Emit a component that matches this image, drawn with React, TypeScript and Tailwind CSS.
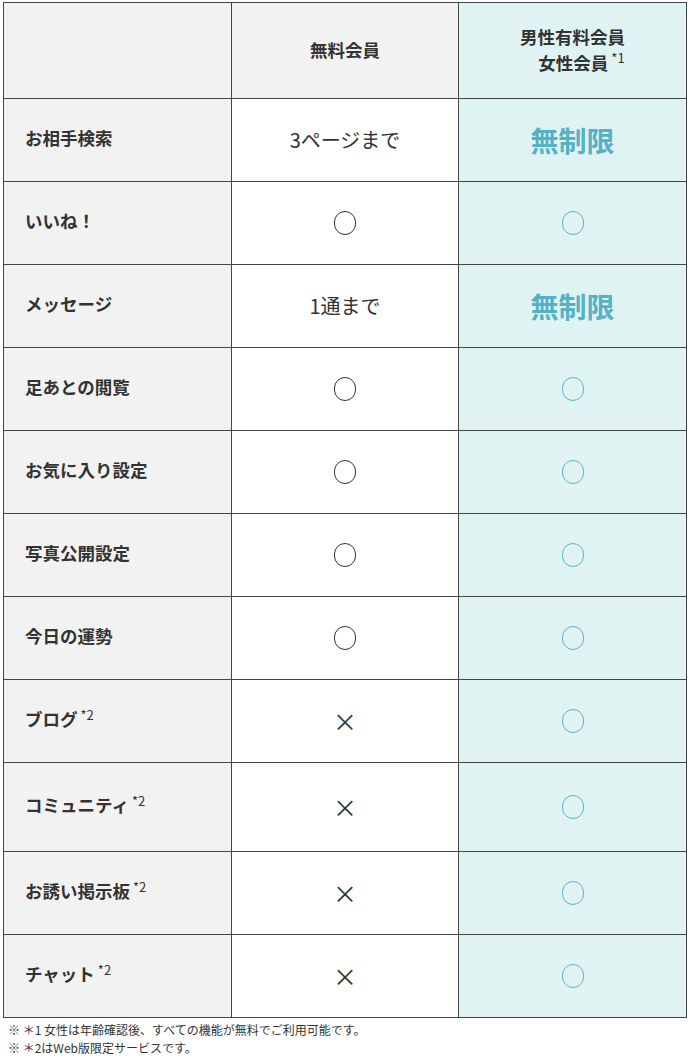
const rows: { label: string; note?: boolean; free: string; paid: string; tall?: boolean }[] = [
  { label: "お相手検索", free: "3ページまで", paid: "無制限" },
  { label: "いいね！", free: "○", paid: "○" },
  { label: "メッセージ", free: "1通まで", paid: "無制限" },
  { label: "足あとの閲覧", free: "○", paid: "○" },
  { label: "お気に入り設定", free: "○", paid: "○" },
  { label: "写真公開設定", free: "○", paid: "○" },
  { label: "今日の運勢", free: "○", paid: "○" },
  { label: "ブログ", note: true, free: "×", paid: "○" },
  { label: "コミュニティ", note: true, free: "×", paid: "○", tall: true },
  { label: "お誘い掲示板", note: true, free: "×", paid: "○" },
  { label: "チャット", note: true, free: "×", paid: "○" },
];

function Value({ v, paid }: { v: string; paid?: boolean }) {
  if (v === "○")
    return (
      <span
        className={`inline-block align-middle w-[22px] h-[24px] rounded-full border ${
          paid ? "border-[#5bb5c8]" : "border-[#333]"
        }`}
      />
    );
  if (v === "×") return <span className="text-[24px] leading-none text-[#333]">×</span>;
  if (paid) return <span className="text-[28px] font-bold leading-none text-[#55b1c4]">{v}</span>;
  return <span className="text-[20px] leading-none text-[#333]">{v}</span>;
}

export default function App() {
  return (
    <div className="w-[690px] bg-white pt-[2px] pl-[3px] text-[#333] font-['Noto_Sans_CJK_JP','Noto_Sans',sans-serif]">
      <table className="w-[683px] border-collapse table-fixed">
        <colgroup>
          <col className="w-[228px]" />
          <col className="w-[227px]" />
          <col className="w-[228px]" />
        </colgroup>
        <thead>
          <tr className="h-[96px]">
            <th className="border border-[#444] bg-[#f2f2f2]" />
            <th className="border border-[#444] bg-[#f2f2f2] text-[17.5px] font-bold leading-none pb-[1px]">無料会員</th>
            <th className="border border-[#444] bg-[#e0f3f3] text-[17.5px] font-bold leading-[26px] pb-[2px]">
              男性有料会員
              <br />
              <span className="pl-[18px]">
                女性会員<sup className="text-[13px] font-normal ml-[3px]">*1</sup>
              </span>
            </th>
          </tr>
        </thead>
        <tbody>
          {rows.map((r) => (
            <tr key={r.label} className={r.tall ? "h-[89px]" : "h-[83px]"}>
              <td className="border border-[#444] bg-[#f2f2f2] pl-[21px] pb-[4px] text-[17.5px] font-bold leading-none">
                {r.label}
                {r.note && <sup className="text-[13px] font-normal ml-[3px]">*2</sup>}
              </td>
              <td className="border border-[#444] bg-white text-center align-middle leading-none pb-[1px]">
                <Value v={r.free} />
              </td>
              <td className="border border-[#444] bg-[#e0f3f3] text-center align-middle leading-none pb-[1px]">
                <Value v={r.paid} paid />
              </td>
            </tr>
          ))}
        </tbody>
      </table>
      <div className="pl-[5px] pt-[3px] text-[12px] leading-[18px] text-[#333]">
        <p>※ ＊1 女性は年齢確認後、すべての機能が無料でご利用可能です。</p>
        <p>※ ＊2はWeb版限定サービスです。</p>
      </div>
    </div>
  );
}
